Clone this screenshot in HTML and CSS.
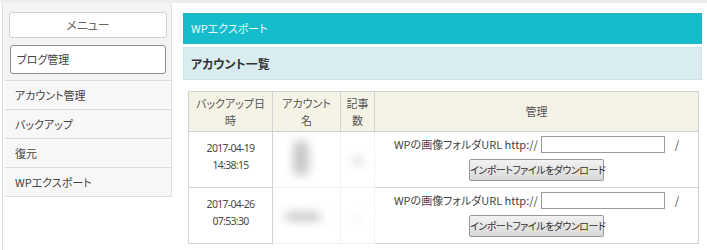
FILE: index.html
```html
<!DOCTYPE html>
<html lang="ja">
<head>
  <meta charset="UTF-8" />
  <title>WPエクスポート</title>
  <link rel="stylesheet" href="styles.css">
</head>
<body>
  <div class="topstrip"></div>
  <div class="layout">
    <aside class="sidebar">
      <div class="menu-head">
        <div class="menu-title">メニュー</div>
        <div class="menu-current">ブログ管理</div>
      </div>
      <ul class="menu-list">
        <li>アカウント管理</li>
        <li>バックアップ</li>
        <li>復元</li>
        <li>WPエクスポート</li>
      </ul>
    </aside>

    <main class="content">
      <div class="page-title">WPエクスポート</div>
      <div class="section-title">アカウント一覧</div>

      <table class="accounts">
        <thead>
          <tr>
            <th class="col-date">バックアップ日時</th>
            <th class="col-name">アカウント名</th>
            <th class="col-count">記事数</th>
            <th>管理</th>
          </tr>
        </thead>
        <tbody>
          <tr>
            <td class="date">2017-04-19<br>14:38:15</td>
            <td class="masked"><span class="blob blob-tall"></span></td>
            <td class="masked"><span class="blob blob-dot"></span></td>
            <td class="manage">
              <div class="url-line">WPの画像フォルダURL http:// <input type="text"> /</div>
              <button>インポートファイルをダウンロード</button>
            </td>
          </tr>
          <tr>
            <td class="date">2017-04-26<br>07:53:30</td>
            <td class="masked"><span class="blob blob-wide"></span></td>
            <td class="masked"><span class="blob blob-faint"></span></td>
            <td class="manage">
              <div class="url-line">WPの画像フォルダURL http:// <input type="text"> /</div>
              <button>インポートファイルをダウンロード</button>
            </td>
          </tr>
        </tbody>
      </table>
    </main>
  </div>
</body>
</html>
```

FILE: styles.css
```css
body {
  margin: 0;
  font-family: "Noto Sans CJK JP", "Noto Sans", sans-serif;
  font-feature-settings: "palt";
  font-size: 11px;
  color: #444;
  background: #fff;
}

.topstrip {
  height: 3px;
  background: #ececec;
}

.layout {
  display: flex;
  align-items: flex-start;
  gap: 11px;
  min-height: 247px;
}

.sidebar {
  width: 169px;
  margin-left: 2px;
  align-self: stretch;
  border-left: 1px solid #dedede;
}

.menu-head {
  background: #f4f4f4;
  border-right: 1px solid #e2e2e2;
  padding: 9px 4px 6px 6px;
}

.menu-title {
  height: 24px;
  line-height: 24px;
  text-align: center;
  font-size: 12px;
  color: #666;
  background: #fff;
  border: 1px solid #d0d0d0;
  border-radius: 3px;
}

.menu-current {
  height: 27px;
  line-height: 27px;
  margin: 7px 1px 0 1px;
  padding-left: 6px;
  font-size: 11px;
  color: #444;
  background: #fff;
  border: 1px solid #8c8c8c;
  border-radius: 3px;
}

.menu-list {
  list-style: none;
  margin: 0 0 0 2px;
  padding: 0;
  border-top: 1px solid #dcdcdc;
}

.menu-list li {
  height: 28px;
  line-height: 28px;
  padding-left: 10px;
  font-size: 11px;
  color: #444;
  background: #f7f7f7;
  border-bottom: 1px solid #dcdcdc;
  border-right: 1px solid #e2e2e2;
}

.content {
  width: 519px;
  padding-top: 10px;
}

.page-title {
  height: 29px;
  line-height: 29px;
  padding-left: 7px;
  font-size: 11px;
  color: #e8fbfd;
  background: #15bdcc;
  border: 1px solid #2bb0bd;
}

.section-title {
  height: 31px;
  line-height: 31px;
  margin-top: 3px;
  padding-left: 7px;
  font-size: 12px;
  font-weight: bold;
  color: #333;
  background: #d9edf1;
  border: 1px solid #d0e2e6;
}

.accounts {
  margin: 11px 3px 0 5px;
  width: 511px;
  border-collapse: collapse;
  table-layout: fixed;
}

.accounts th,
.accounts td {
  border: 1px solid #d2d2d2;
  text-align: center;
  vertical-align: middle;
  padding: 0;
}

.accounts th {
  height: 39px;
  font-weight: normal;
  font-size: 11px;
  line-height: 17px;
  color: #555;
  background: #f5f2e6;
}

.accounts .col-date { padding: 0 5px; width: 73px; }
.accounts .col-name { padding: 0 9px; width: 49px; }
.accounts .col-count { padding: 0 5px; width: 23px; }

.accounts td {
  height: 55px;
  background: #fff;
}

.accounts td.date {
  height: 49px;
  padding-bottom: 6px;
  font-family: "Noto Sans", "DejaVu Sans", sans-serif;
  font-size: 10.5px;
  letter-spacing: -0.7px;
  line-height: 17px;
  color: #4a4a4a;
}

.accounts td.masked {
  border-color: #f3f3f3;
}

.blob {
  display: inline-block;
  background: #c8c8c8;
  border-radius: 8px;
  filter: blur(5px);
}

.blob-tall { width: 16px; height: 36px; margin-left: -12px; }
.blob-dot { width: 10px; height: 8px; opacity: 0.7; }
.blob-wide { width: 36px; height: 9px; margin-left: -8px; }
.blob-faint { width: 6px; height: 6px; opacity: 0.4; }

.accounts td.manage {
  height: 46px;
  padding: 3px 0 6px;
}

.url-line {
  color: #444;
  font-size: 11px;
  line-height: 17px;
}

.url-line input {
  width: 120px;
  height: 13px;
  margin: 0 7px 0 1px;
  padding: 1px;
  border: 1px solid #9a9a9a;
  vertical-align: top;
}

.manage button {
  display: block;
  margin: 6px auto 0;
  width: 135px;
  height: 22px;
  padding: 0;
  white-space: nowrap;
  font-family: inherit;
  font-feature-settings: "palt";
  font-size: 10px;
  letter-spacing: -0.5px;
  color: #333;
  background: linear-gradient(#f2f2f2, #d9d9d9);
  border: 1px solid #999;
  border-radius: 2px;
}
```
